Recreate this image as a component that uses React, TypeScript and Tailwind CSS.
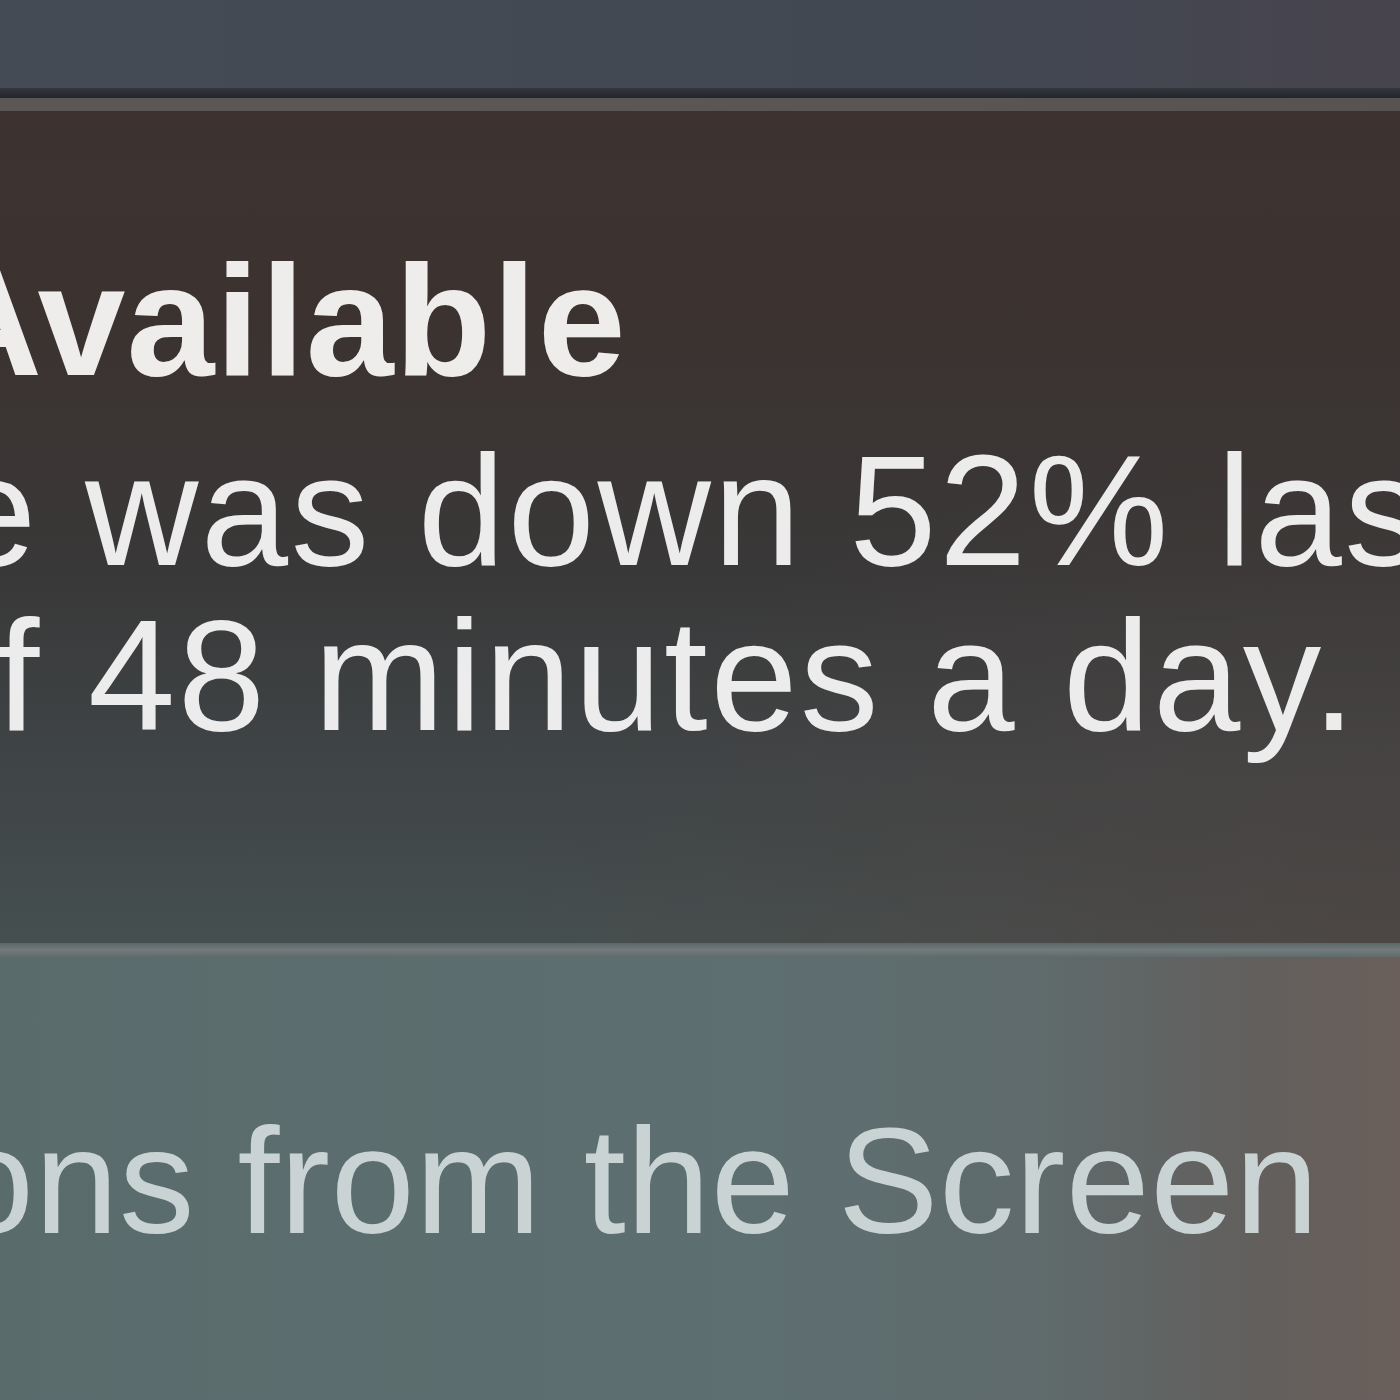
import React from "react";

const font = { fontFamily: '"Liberation Sans", Arial, sans-serif' };

const App: React.FC = () => {
  return (
    <div
      className="w-[1400px] h-[1400px] overflow-hidden flex flex-col bg-[#5c6c6d]"
      style={font}
    >
      {/* top strip of the window above */}
      <div className="h-[88px] shrink-0 bg-[linear-gradient(to_right,#444b54_0%,#424852_70%,#464550_90%,#48444d_100%)]" />
      <div className="h-[10px] shrink-0 bg-[linear-gradient(to_bottom,#34383e,#22252a)]" />
      <div className="h-[13px] shrink-0 bg-[linear-gradient(to_right,#5b5756,#5a5656_60%,#575352)]" />

      {/* notification card */}
      <div className="h-[832px] shrink-0 flex flex-col pt-[127px] overflow-hidden bg-[radial-gradient(ellipse_at_100%_100%,rgba(82,64,60,0.55)_0%,transparent_45%),linear-gradient(to_bottom,#3d3230_0%,#3b3331_30%,#393838_55%,#3f4446_78%,#454f4f_100%)]">
        <div className="whitespace-nowrap -ml-[72px] text-[158px] leading-[165px] font-bold tracking-[1.2px] text-[#efedec]">
          Available
        </div>
        <div className="mt-[25px] text-[157px] leading-[165px] tracking-[2.5px] text-[#edecec]">
          <div className="whitespace-nowrap -ml-[51px]">e was down 52% last week, for an</div>
          <div className="whitespace-nowrap -ml-[94px]">of 48 minutes a day.</div>
        </div>
      </div>

      <div className="h-[14px] shrink-0 bg-[linear-gradient(to_bottom,#5d6666,#737c7c_50%,#5f6a6a)]" />

      {/* options below */}
      <div className="flex-1 pt-[141px] bg-[linear-gradient(to_right,#5a6b6c_0%,#5e6f71_55%,#5f6a6b_75%,#625f5d_90%,#6b5f5b_100%)]">
        <div className="whitespace-nowrap -ml-[50px] text-[151px] leading-[165px] tracking-[0.5px] text-[#cad3d3]">
          ons from the Screen
        </div>
      </div>
    </div>
  );
};

export default App;
